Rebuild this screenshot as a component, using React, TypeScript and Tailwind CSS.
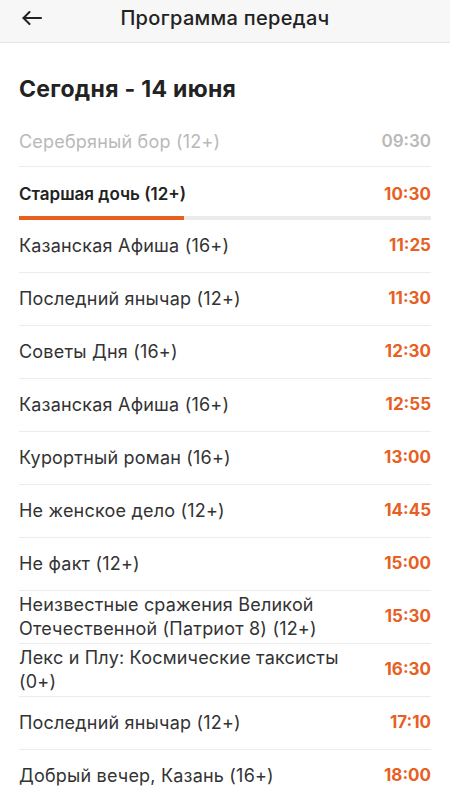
type Item = { title: string; time: string }

const items: Item[] = [
  { title: 'Казанская Афиша (16+)', time: '11:25' },
  { title: 'Последний янычар (12+)', time: '11:30' },
  { title: 'Советы Дня (16+)', time: '12:30' },
  { title: 'Казанская Афиша (16+)', time: '12:55' },
  { title: 'Курортный роман (16+)', time: '13:00' },
  { title: 'Не женское дело (12+)', time: '14:45' },
  { title: 'Не факт (12+)', time: '15:00' },
  { title: 'Неизвестные сражения Великой Отечественной (Патриот 8) (12+)', time: '15:30' },
  { title: 'Лекс и Плу: Космические таксисты (0+)', time: '16:30' },
  { title: 'Последний янычар (12+)', time: '17:10' },
  { title: 'Добрый вечер, Казань (16+)', time: '18:00' },
]

export default function App() {
  return (
    <div className="w-[450px] h-[800px] overflow-hidden bg-white font-['Inter','Roboto',sans-serif] text-[#2b2b2b]">
      {/* Header */}
      <div className="h-[43px] bg-[#f7f7f7] border-b border-[#e6e6e6] flex items-start pt-[6px] relative">
        <button className="ml-[22px] h-6 w-[20px] flex items-center justify-center text-[#222]">
          <svg width="20" height="14" viewBox="0 0 20 14" fill="none" stroke="currentColor" strokeWidth="2" strokeLinecap="round" strokeLinejoin="round">
            <path d="M19 7H1.5" />
            <path d="M7.5 1L1.5 7l6 6" />
          </svg>
        </button>
        <div className="absolute left-0 right-0 top-[6px] text-center text-[20px] leading-6 font-medium tracking-[0.3px] text-[#222] pointer-events-none">
          Программа передач
        </div>
      </div>

      <div className="px-[19px]">
        <h1 className="mt-[31px] text-[23px] leading-[30px] font-bold tracking-[0.3px] text-[#222]">Сегодня - 14 июня</h1>

        {/* Past */}
        <div className="mt-[10px] h-[53px] border-b border-[#ececec] flex items-center justify-between pt-[3px]">
          <span className="text-[18px] tracking-[0.2px] text-[#b9b9b9]">Серебряный бор (12+)</span>
          <span className="text-[17px] font-semibold text-[#b9b9b9]">09:30</span>
        </div>

        {/* Current */}
        <div className="h-[53px] flex flex-col">
          <div className="flex-1 flex items-center justify-between pt-[6px]">
            <span className="text-[17px] font-semibold text-[#222]">Старшая дочь (12+)</span>
            <span className="text-[17px] font-bold text-[#e8601f]">10:30</span>
          </div>
          <div className="h-[4px] bg-[#ebebeb]">
            <div className="h-full w-[40%] bg-[#e8601f]" />
          </div>
        </div>

        {items.map((it, i) => (
          <div
            key={i}
            className="h-[53px] border-b border-[#ececec] flex items-center justify-between gap-10"
          >
            <span className="text-[18px] leading-6 tracking-[0.2px] text-[#333]">{it.title}</span>
            <span className="shrink-0 text-[17px] font-bold text-[#e8601f]">{it.time}</span>
          </div>
        ))}
      </div>
    </div>
  )
}
